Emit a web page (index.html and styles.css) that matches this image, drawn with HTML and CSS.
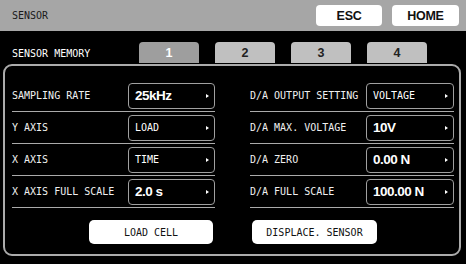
FILE: index.html
```html
<!DOCTYPE html>
<html>
<head>
<meta charset="utf-8">
<link rel="stylesheet" href="styles.css">
</head>
<body>
<div class="screen">
  <header class="topbar">
    <span class="title">SENSOR</span>
    <div class="actions">
      <div class="btn-top esc">ESC</div>
      <div class="btn-top home">HOME</div>
    </div>
  </header>
  <div class="memrow">
    <span class="memlabel">SENSOR MEMORY</span>
    <div class="tabs">
      <div class="tab active">1</div>
      <div class="tab">2</div>
      <div class="tab">3</div>
      <div class="tab">4</div>
    </div>
  </div>
  <section class="panel">
    <div class="cols">
      <div class="col">
        <div class="row"><span class="label">SAMPLING RATE</span><div class="val"><span class="big">25kHz</span><i class="arrow"></i></div></div>
        <div class="row"><span class="label">Y AXIS</span><div class="val"><span class="small">LOAD</span><i class="arrow"></i></div></div>
        <div class="row"><span class="label">X AXIS</span><div class="val"><span class="small">TIME</span><i class="arrow"></i></div></div>
        <div class="row"><span class="label">X AXIS FULL SCALE</span><div class="val"><span class="big">2.0 s</span><i class="arrow"></i></div></div>
      </div>
      <div class="col">
        <div class="row"><span class="label">D/A OUTPUT SETTING</span><div class="val"><span class="small">VOLTAGE</span><i class="arrow"></i></div></div>
        <div class="row"><span class="label">D/A MAX. VOLTAGE</span><div class="val"><span class="big">10V</span><i class="arrow"></i></div></div>
        <div class="row"><span class="label">D/A ZERO</span><div class="val"><span class="big">0.00 N</span><i class="arrow"></i></div></div>
        <div class="row"><span class="label">D/A FULL SCALE</span><div class="val"><span class="big">100.00 N</span><i class="arrow"></i></div></div>
      </div>
    </div>
    <div class="btnrow">
      <div class="bbtn left">LOAD CELL</div>
      <div class="bbtn right">DISPLACE. SENSOR</div>
    </div>
  </section>
</div>
</body>
</html>
```
FILE: styles.css
```css
html, body {
  margin: 0;
  padding: 0;
  background: #000;
}
body {
  width: 466px;
  height: 264px;
  overflow: hidden;
  font-family: "DejaVu Sans Mono", "Liberation Mono", monospace;
}
.screen {
  width: 466px;
  height: 264px;
}
.topbar {
  height: 31px;
  background: #a6a6a6;
  display: flex;
  align-items: center;
  justify-content: space-between;
  padding: 0 7px 0 12px;
  box-sizing: border-box;
}
.title {
  font-size: 10px;
  color: #1a1a1a;
}
.actions {
  display: flex;
  gap: 10px;
}
.btn-top {
  height: 21px;
  background: #fff;
  border-radius: 4px;
  display: flex;
  align-items: center;
  justify-content: center;
  font: bold 12.5px "Liberation Sans", Arial, sans-serif;
  letter-spacing: -0.3px;
  color: #111;
}
.esc { width: 66px; }
.home { width: 67px; }

.memrow {
  height: 33px;
  display: flex;
  align-items: flex-end;
  padding-left: 12px;
}
.memlabel {
  width: 127px;
  color: #fff;
  font-size: 10px;
  line-height: 12px;
  margin-bottom: 4px;
}
.tabs {
  display: flex;
  gap: 16px;
  margin-bottom: 1px;
}
.tab {
  width: 60px;
  height: 21px;
  border-radius: 4px 4px 0 0;
  background: #c0c0c0;
  color: #222;
  font: bold 12.5px "Liberation Sans", Arial, sans-serif;
  display: flex;
  align-items: center;
  justify-content: center;
}
.tab.active {
  background: #9e9e9e;
  color: #fff;
}

.panel {
  margin: 0 5px 0 3px;
  height: 192px;
  box-sizing: border-box;
  border: 2px solid #ababab;
  border-radius: 9px;
  padding: 14px 5px 0 7px;
}
.cols {
  display: grid;
  grid-template-columns: 203px 204px;
  column-gap: 35px;
}
.row {
  display: flex;
  align-items: center;
  height: 32px;
  box-sizing: border-box;
  border-bottom: 1px solid #aaa;
}
.label {
  width: 116px;
  flex: none;
  color: #f0f0f0;
  font-size: 10px;
  white-space: nowrap;
}
.val {
  flex: 1;
  height: 26px;
  box-sizing: border-box;
  border: 1.5px solid #a0a0a0;
  border-radius: 4px;
  display: flex;
  align-items: center;
  justify-content: space-between;
  padding: 0 5px 0 6px;
  color: #fff;
}
.big {
  font: bold 13.5px "Liberation Sans", Arial, sans-serif;
  letter-spacing: -0.5px;
}
.small {
  font-size: 10px;
}
.arrow {
  width: 0;
  height: 0;
  border-left: 3px solid #fff;
  border-top: 2.5px solid transparent;
  border-bottom: 2.5px solid transparent;
}
.btnrow {
  display: grid;
  grid-template-columns: 203px 204px;
  column-gap: 35px;
  margin-top: 12px;
}
.bbtn {
  height: 24px;
  background: #fff;
  border-radius: 5px;
  display: flex;
  align-items: center;
  justify-content: center;
  color: #111;
  font-size: 10px;
}
.bbtn.left {
  width: 124px;
  justify-self: end;
  margin-right: 2px;
}
.bbtn.right {
  width: 125px;
  justify-self: start;
  margin-left: 2px;
}
```
